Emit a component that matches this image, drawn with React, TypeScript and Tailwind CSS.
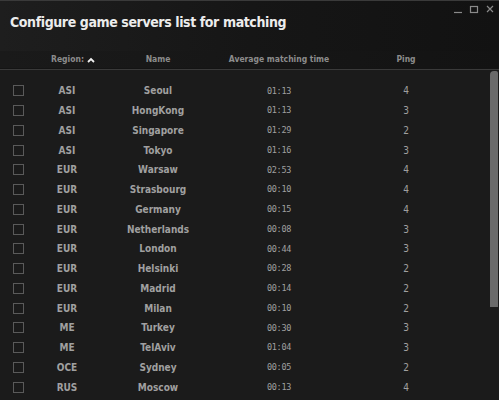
import React from "react";

const rows: [string, string, string, string][] = [
  ["ASI", "Seoul", "01:13", "4"],
  ["ASI", "HongKong", "01:13", "3"],
  ["ASI", "Singapore", "01:29", "2"],
  ["ASI", "Tokyo", "01:16", "3"],
  ["EUR", "Warsaw", "02:53", "4"],
  ["EUR", "Strasbourg", "00:10", "4"],
  ["EUR", "Germany", "00:15", "4"],
  ["EUR", "Netherlands", "00:08", "3"],
  ["EUR", "London", "00:44", "3"],
  ["EUR", "Helsinki", "00:28", "2"],
  ["EUR", "Madrid", "00:14", "2"],
  ["EUR", "Milan", "00:10", "2"],
  ["ME", "Turkey", "00:30", "3"],
  ["ME", "TelAviv", "01:04", "3"],
  ["OCE", "Sydney", "00:05", "2"],
  ["RUS", "Moscow", "00:13", "4"],
];

export default function App() {
  return (
    <div
      className="relative w-[499px] h-[400px] overflow-hidden bg-[#141414] border-t border-[#3a3a3a]"
      style={{ fontFamily: '"DejaVu Sans Condensed", "Liberation Sans", sans-serif' }}
    >
      {/* window controls */}
      <div className="absolute right-[4px] top-[3px] flex items-center gap-[6px] text-[#8a8a8a]">
        <svg width="10" height="10" viewBox="0 0 10 10"><path d="M1 8.5h8" stroke="currentColor" strokeWidth="1.2" /></svg>
        <svg width="10" height="10" viewBox="0 0 10 10"><rect x="1.5" y="2.5" width="7" height="6" fill="none" stroke="currentColor" strokeWidth="1.2" /></svg>
        <svg width="10" height="10" viewBox="0 0 10 10"><path d="M2 2l6 6M8 2l-6 6" stroke="currentColor" strokeWidth="1.2" /></svg>
      </div>

      <div className="h-[50px] pl-[10px] pt-[11px] bg-gradient-to-r from-[#1e1e1e] via-[#161616] to-[#121212]">
        <div className="text-[14px] font-bold text-[#ececec] leading-[20px] tracking-[-0.4px]">
          Configure game servers list for matching
        </div>
      </div>

      <div className="flex h-[17px] items-center text-[8.5px] font-bold text-[#8c8c8c] bg-gradient-to-r from-[#1a1a1a] to-[#131313]">
        <div className="w-[34px]" />
        <div className="w-[66px] flex items-center justify-center gap-[3px]">
          <span className="ml-[12px]">Region:</span>
          <svg width="8" height="6" viewBox="0 0 8 6"><path d="M1 5l3-3 3 3" fill="none" stroke="#f0f0f0" strokeWidth="1.8" /></svg>
        </div>
        <div className="w-[116px] text-center">Name</div>
        <div className="w-[126px] text-center">Average matching time</div>
        <div className="w-[128px] text-center">Ping</div>
      </div>
      <div className="h-[1px] bg-[#3a3a3a] mt-[1px]" />

      <div className="relative bg-[#1b1b1b] h-[340px] pt-[11px]">
        <div className="absolute right-[1px] top-[1px] w-[8px] h-[236px] rounded-tl-[4px] rounded-tr-[2px] bg-[#6a6a6a]" />
        {rows.map(([reg, name, time, ping]) => (
          <div key={name} className="flex h-[19.75px] items-center text-[10px] text-[#a0a0a0]">
            <div className="w-[34px] flex justify-start pl-[13px]">
              <div className="w-[11px] h-[11px] border border-[#5a5a5a]" />
            </div>
            <div className="w-[66px] text-center font-bold">{reg}</div>
            <div className="w-[116px] text-center font-bold">{name}</div>
            <div className="w-[126px] text-center text-[8.5px] tracking-[-0.3px]" style={{ fontFamily: '"DejaVu Sans Mono", monospace' }}>{time}</div>
            <div className="w-[128px] text-center">{ping}</div>
          </div>
        ))}
      </div>
    </div>
  );
}
